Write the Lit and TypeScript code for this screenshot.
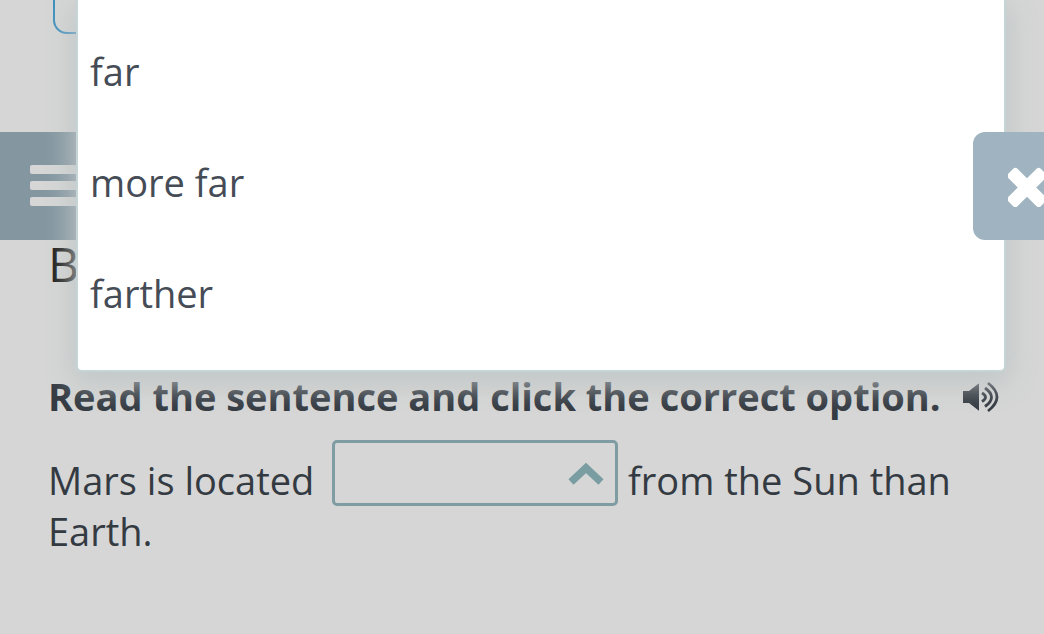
import { LitElement, html, css } from "lit";
import { customElement, state } from "lit/decorators.js";

const OPTIONS = ["far", "more far", "farther"];

@customElement("app-root")
export class AppRoot extends LitElement {
  static styles = css`
    :host {
      display: block;
      position: relative;
      min-height: 100vh;
      overflow: hidden;
      box-sizing: border-box;
      background: #d6d6d6;
      color: #343a42;
      font-family: "Open Sans", "Noto Sans", sans-serif;
      font-size: 38px;
      line-height: 51px;
    }
    *,
    *::before {
      box-sizing: border-box;
    }
    button {
      font: inherit;
      color: inherit;
      border: 0;
      padding: 0;
      cursor: pointer;
    }
    .page {
      padding: 0 40px 0 48px;
    }
    .card {
      height: 34px;
      margin-left: 5px;
      border: 2px solid #3c8fbf;
      border-top: 0;
      border-radius: 0 0 14px 14px;
    }
    .title {
      margin: 197px 0 0;
      color: #1c1c1c;
      font-size: 48px;
      font-weight: 400;
      line-height: 66px;
    }
    .prompt {
      display: flex;
      align-items: center;
      gap: 22px;
      margin: 74px 0 0;
      white-space: nowrap;
    }
    .prompt h2 {
      margin: 0;
      font-size: 38px;
      font-weight: 700;
      line-height: 51px;
      color: #343a42;
    }
    .audio {
      display: flex;
      background: none;
    }
    .sentence {
      margin: 18px 0 0;
    }
    .blank {
      display: inline-grid;
      width: 286px;
      height: 66px;
      margin-left: 8px;
      vertical-align: text-bottom;
    }
    .blank select,
    .blank svg {
      grid-area: 1 / 1;
    }
    .blank select {
      appearance: none;
      width: 100%;
      height: 100%;
      padding: 0 56px 0 12px;
      border: 3px solid #7f9ca3;
      border-radius: 5px;
      background: transparent;
      font: inherit;
      color: inherit;
    }
    .blank svg {
      place-self: center end;
      margin-right: 14px;
      pointer-events: none;
    }
    .menu {
      position: absolute;
      top: 132px;
      left: 0;
      display: flex;
      align-items: center;
      width: 108px;
      height: 108px;
      padding-left: 30px;
      background: #8497a1;
    }
    .options {
      position: absolute;
      top: 0;
      left: 76px;
      right: 38px;
      display: grid;
      padding: 16px 0 21px;
      background: #fff;
      border: 2px solid #c5d5d6;
      border-top: 0;
      border-radius: 0 0 6px 6px;
      box-shadow: 0 8px 28px 4px rgba(192, 198, 198, 0.95);
      color: #454c56;
    }
    .options button {
      height: 111px;
      padding: 0 12px;
      background: none;
      text-align: left;
    }
    .close {
      position: absolute;
      top: 132px;
      right: 0;
      display: flex;
      align-items: center;
      width: 71px;
      height: 108px;
      padding-left: 35px;
      overflow: hidden;
      border-radius: 12px 0 0 12px;
      background: #9fb4c0;
    }
    .close svg {
      flex: none;
    }
  `;

  @state() private value = "";

  render() {
    return html`
      <main class="page">
        <div class="card"></div>
        <h1 class="title">B</h1>
        <div class="prompt">
          <h2>Read the sentence and click the correct option.</h2>
          <button class="audio" aria-label="Listen">
            <svg width="36" height="32" viewBox="0 0 36 32" fill="none">
              <path d="M0 10h6L15 3q1-1 1 0v26q0 1-1 0L6 22H0z" fill="#343a42" />
              <path
                d="M19 12q7 4 0 8.500M22 7q13 9 0 18.500M25 2q18 14 0 28"
                stroke="#343a42"
                stroke-width="2.800"
              />
            </svg>
          </button>
        </div>
        <p class="sentence">
          Mars is located
          <label class="blank">
            <select
              aria-label="Missing word"
              .value=${this.value}
              @change=${(e: Event) => (this.value = (e.target as HTMLSelectElement).value)}
            >
              <option value=""></option>
              ${OPTIONS.map((o) => html`<option value=${o}>${o}</option>`)}
            </select>
            <svg width="36" height="24" viewBox="0 0 36 24">
              <path d="M3 21 18 7l15 14" fill="none" stroke="#7a9da2" stroke-width="7.500" />
            </svg>
          </label>
          from the Sun than Earth.
        </p>
      </main>
      <button class="menu" aria-label="Menu">
        <svg width="60" height="42" viewBox="0 0 60 42" fill="#d6d6d6">
          <rect y="0" width="60" height="9" rx="2" />
          <rect y="16" width="60" height="9" rx="2" />
          <rect y="32" width="60" height="9" rx="2" />
        </svg>
      </button>
      <div class="options">
        ${OPTIONS.map((o) => html`<button @click=${() => (this.value = o)}>${o}</button>`)}
      </div>
      <button class="close" aria-label="Close">
        <svg width="40" height="42" viewBox="0 0 40 42" fill="#fff">
          <rect x="-4" y="16" width="46" height="13" rx="3" transform="rotate(45 19 22.500)" />
          <rect x="-4" y="16" width="46" height="13" rx="3" transform="rotate(-45 19 22.500)" />
        </svg>
      </button>
    `;
  }
}
